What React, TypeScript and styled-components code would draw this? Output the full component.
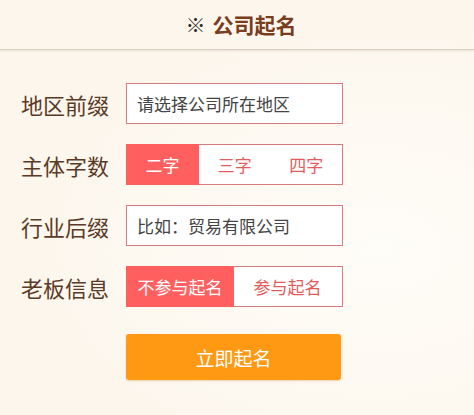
import * as React from 'react';
import styled, { createGlobalStyle } from 'styled-components';

const Global = createGlobalStyle`
  html, body {
    margin: 0;
    padding: 0;
    background: #fdf8f0;
    font-family: "Noto Sans CJK SC", "Noto Sans", sans-serif;
  }
`;

const Page = styled.div`
  width: 474px;
  height: 415px;
  background: radial-gradient(ellipse at 80% 60%, #fffdf8 0%, #fcf6ec 70%);
  overflow: hidden;
`;

const Header = styled.div`
  height: 50px;
  display: flex;
  align-items: center;
  justify-content: center;
  gap: 7px;
  border-bottom: 1px solid #d9cfc3;
  box-shadow: 0 1px 2px rgba(180, 160, 130, 0.25);
  padding-left: 8px;
  box-sizing: border-box;
`;

const Mark = styled.span`
  font-size: 20px;
  color: #2e2a28;
  font-weight: 400;
  line-height: 1;
`;

const Title = styled.h1`
  margin: 0;
  font-size: 21px;
  font-weight: 700;
  color: #7a3d1e;
  line-height: 1;
`;

const Form = styled.div`
  display: flex;
  flex-direction: column;
  gap: 20px;
  padding: 33px 0 0 21px;
`;

const Row = styled.div`
  display: flex;
  align-items: center;
  height: 41px;
`;

const Label = styled.span`
  width: 105px;
  font-size: 22px;
  color: #5b3b28;
`;

const Input = styled.input`
  box-sizing: border-box;
  width: 217px;
  height: 41px;
  border: 1px solid #d67c7f;
  background: #fff;
  padding: 0 10px;
  font-family: inherit;
  font-size: 17px;
  color: #444;
  outline: none;
  &::placeholder {
    color: #444;
  }
`;

const Segments = styled.div`
  box-sizing: border-box;
  display: flex;
  width: 217px;
  height: 41px;
  border: 1px solid #d67c7f;
  background: #fff;
`;

const Segment = styled.div<{ $active?: boolean; $w: number }>`
  width: ${(p) => p.$w}px;
  flex: none;
  display: flex;
  align-items: center;
  justify-content: center;
  font-size: 17px;
  color: ${(p) => (p.$active ? '#fff' : '#e25c5c')};
  background: ${(p) => (p.$active ? '#ff5f5f' : '#fff')};
  margin: ${(p) => (p.$active ? '-1px 0 -1px -1px' : '0')};
  cursor: pointer;
`;

const Submit = styled.button`
  margin: 7px 0 0 105px;
  width: 215px;
  height: 46px;
  border: none;
  border-radius: 3px;
  background: #ff9914;
  color: #fff;
  font-family: inherit;
  font-size: 19px;
  box-shadow: 0 1px 2px rgba(200, 120, 20, 0.3);
  cursor: pointer;
`;

export default function App() {
  const [count, setCount] = React.useState(0);
  const [boss, setBoss] = React.useState(0);

  return (
    <Page>
      <Global />
      <Header>
        <Mark>※</Mark>
        <Title>公司起名</Title>
      </Header>
      <Form>
        <Row>
          <Label>地区前缀</Label>
          <Input placeholder="请选择公司所在地区" />
        </Row>
        <Row>
          <Label>主体字数</Label>
          <Segments>
            {['二字', '三字', '四字'].map((t, i) => (
              <Segment key={t} $w={i === 0 ? 73 : 71.5} $active={count === i} onClick={() => setCount(i)}>
                {t}
              </Segment>
            ))}
          </Segments>
        </Row>
        <Row>
          <Label>行业后缀</Label>
          <Input placeholder="比如：贸易有限公司" />
        </Row>
        <Row>
          <Label>老板信息</Label>
          <Segments>
            {['不参与起名', '参与起名'].map((t, i) => (
              <Segment key={t} $w={i === 0 ? 108 : 107} $active={boss === i} onClick={() => setBoss(i)}>
                {t}
              </Segment>
            ))}
          </Segments>
        </Row>
        <Submit>立即起名</Submit>
      </Form>
    </Page>
  );
}
